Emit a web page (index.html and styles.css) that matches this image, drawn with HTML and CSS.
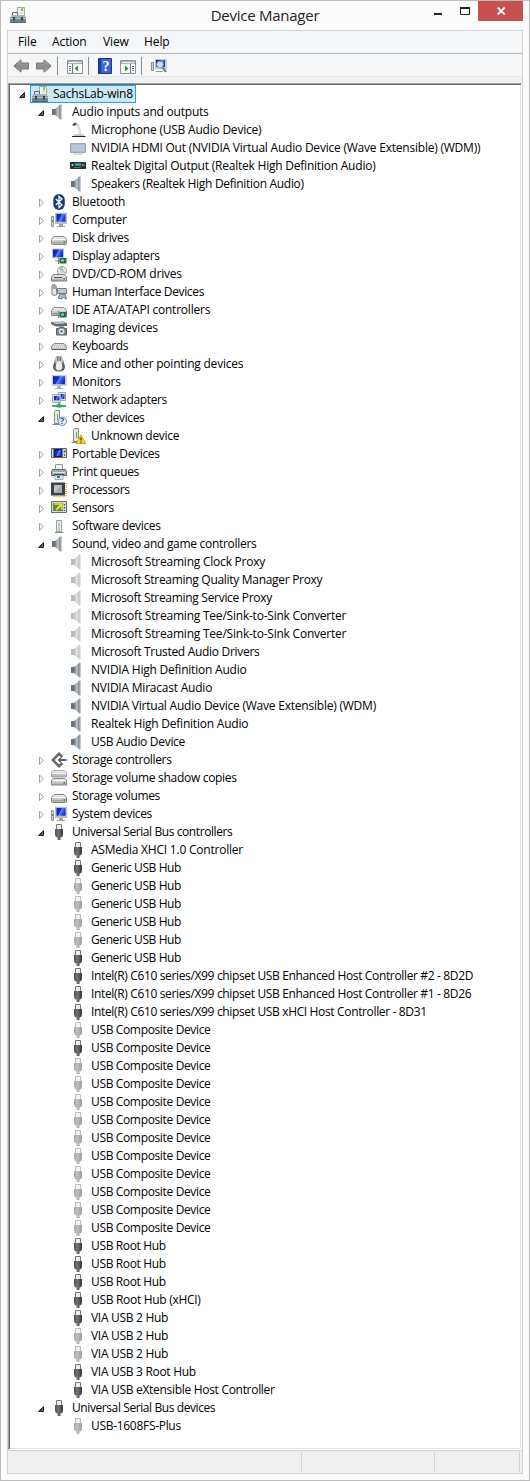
FILE: index.html
```html
<!DOCTYPE html>
<html lang="en">
<head>
<meta charset="utf-8">
<title>Device Manager</title>
<link rel="stylesheet" href="styles.css">
</head>
<body>
<svg class="sprite" aria-hidden="true">
<defs>
<linearGradient id="metal" x1="0" x2="1"><stop offset="0" stop-color="#6b747b"/><stop offset=".55" stop-color="#c6cbcf"/><stop offset="1" stop-color="#5f686f"/></linearGradient>
<linearGradient id="silver" x1="0" y1="0" x2="0" y2="1"><stop offset="0" stop-color="#f4f4f4"/><stop offset="1" stop-color="#aaa"/></linearGradient>
<linearGradient id="screen" x1="0" x2="1" y1="0" y2=".4"><stop offset="0" stop-color="#0619a0"/><stop offset=".5" stop-color="#1234dc"/><stop offset=".55" stop-color="#5f8cf5"/><stop offset="1" stop-color="#1530c8"/></linearGradient>
<linearGradient id="plug" x1="0" x2="1"><stop offset="0" stop-color="#4a4a4d"/><stop offset=".4" stop-color="#77777a"/><stop offset="1" stop-color="#353538"/></linearGradient>
<linearGradient id="arrowfill" x1="0" y1="0" x2="0" y2="1"><stop offset="0" stop-color="#b5b5b5"/><stop offset=".5" stop-color="#8b8b8b"/><stop offset="1" stop-color="#a9a9a9"/></linearGradient>
<symbol id="toolbox" viewBox="0 0 16 16"><path d="M7.5 .5h7v8h-7z" fill="#f2f4ef" stroke="#a5aaa2"/><path d="M9 7l3-4h1v4z" fill="#dfe3da"/><path d="M11 1h2v3h-2z" fill="#8acb45"/><path d="M2.500 8V5.500h5V8" fill="none" stroke="#5e666b"/><path d="M1.500 8h13l1.500 3H0z" fill="#a7b3ba"/><path d="M0 10.500h16V16H0z" fill="#74828b"/><path d="M0 11.500h16" stroke="#b7c3ca"/><path d="M.5 15.500h15" stroke="#56626a"/><path d="M3 10h2v3.500H3zM11 10h2v3.500h-2z" fill="#39434a"/></symbol>
<symbol id="speaker" viewBox="0 0 16 16"><path d="M1 5h3v6H1z" fill="#69737b"/><path d="M4 5l5.500-4.500v15L4 11z" fill="url(#metal)"/><path d="M9.500 .5h1v15h-1z" fill="#8c949a"/></symbol>
<symbol id="mic" viewBox="0 0 16 16"><path d="M3 1.500Q6-.5 8.500 2q2.500 4 3 10H9.500Q8 6 5.500 3.500z" fill="#dcdcdc"/><path d="M2 3l3-2.500 2 1.500-2.500 2z" fill="#4c4c4c"/><path d="M5 12h8l2.500 3H2z" fill="#c9c9c9"/><path d="M2 14.500h13.500" stroke="#222"/></symbol>
<symbol id="hdmi" viewBox="0 0 16 16"><path d="M.5 3.500h15v9H.5z" fill="#aebdcb" stroke="#9aaab9"/><path d="M2 5h12v6H2z" fill="#b9c8da"/><path d="M3 14h10" stroke="#b9bfc5"/></symbol>
<symbol id="digital" viewBox="0 0 16 16"><path d="M0 4h16v7H0z" fill="#29333a"/><path d="M5 5.500h6v2H5z" fill="#31c4c6"/><circle cx="2.500" cy="7" r="1" fill="#d1dae0"/><circle cx="13" cy="7" r="1.200" fill="#7996a5"/><path d="M4 9.500h7" stroke="#576b78"/></symbol>
<symbol id="bluetooth" viewBox="0 0 16 16"><rect x="2.300" width="11.500" height="16" rx="5.700" fill="#123a78"/><path d="M4.800 5l6.200 6-3 2.500v-11L11 5l-6.200 6" fill="none" stroke="#fff" stroke-width="1.300"/></symbol>
<symbol id="monitor" viewBox="0 0 16 16"><path d="M.7 1h15v11h-15z" fill="#c8ccd0"/><path d="M2 2.200h12v8H2z" fill="url(#screen)"/><path d="M6 12h4v2h2v1H4v-1h2z" fill="#a9afb2"/></symbol>
<symbol id="computer" viewBox="0 0 16 16"><path d="M.5 4.500h2v10h-2z" fill="#ddd" stroke="#8b9294"/><path d="M1 8h1v2H1z" fill="#4db02e"/><path d="M4 .7h12V12H4z" fill="#b9c0c7"/><path d="M5.500 2h9v7.700h-9z" fill="url(#screen)"/><path d="M8 12h4v2h2v1H6v-1h2z" fill="#9aa2a8"/></symbol>
<symbol id="disk" viewBox="0 0 16 16"><path d="M3 6.500h10l2.500 3v4q0 1-1 1h-13q-1 0-1-1v-4z" fill="url(#silver)" stroke="#858585"/><path d="M1 9.500h14" stroke="#f8f8f8"/><path d="M2 12.500h9" stroke="#aaa"/><path d="M12.500 11h1.500v2.500h-1.500z" fill="#35a32f"/></symbol>
<symbol id="display" viewBox="0 0 16 16"><path d="M1 .5h12v10H1z" fill="#bfc5cc"/><path d="M2 1.500h10v7.500H2z" fill="url(#screen)"/><path d="M4 12h5v1.500H4z" fill="#aab0b3"/><path d="M8.500 10h7v5.500h-7z" fill="#15734a"/><path d="M10 11.500h3v2h-3z" fill="#9bd4ac"/><path d="M7.500 9v7" stroke="#888"/></symbol>
<symbol id="dvd" viewBox="0 0 16 16"><circle cx="11" cy="5" r="4.600" fill="#e3e7e3" stroke="#8f9690" stroke-width=".8"/><path d="M11 5l-3-3 3-1.500zM11 5l4 2" fill="#a3cf9b" stroke="#9bc294"/><circle cx="11" cy="5" r="1.200" fill="#fff" stroke="#888" stroke-width=".6"/><path d="M2.500 8.500h11l2 2.500v4H.5v-4z" fill="url(#silver)" stroke="#7b7b7b"/><path d="M3 11.500h8" stroke="#555"/><path d="M12.500 12h1.500v1.500h-1.500z" fill="#319f31"/></symbol>
<symbol id="hid" viewBox="0 0 16 16"><path d="M1 1.500q2-1.500 4 0l1 9q-2.500 2-5 0z" fill="#e6e9e8" stroke="#707679"/><path d="M2 4h3M3 .5v4" stroke="#777e82"/><path d="M6.500 4.500h9v5h-9z" fill="#dde1e2" stroke="#788086"/><path d="M7.500 6h7M7.500 8h7" stroke="#6c767d" stroke-dasharray="1 1"/><path d="M7 14l2-4h5l1.500 5-3-1.500L10 15z" fill="#a8bac2" stroke="#647681"/></symbol>
<symbol id="ide" viewBox="0 0 16 16"><path d="M3 5.500h10l2.500 3v5H.5v-5z" fill="url(#silver)" stroke="#858585"/><path d="M2 11.500h6" stroke="#888"/><path d="M8.500 10h7v5.500h-7z" fill="#15734a"/><path d="M10 11.500h3v2h-3z" fill="#9bd4ac"/><path d="M7.500 9v7" stroke="#888"/></symbol>
<symbol id="imaging" viewBox="0 0 16 16"><path d="M0 2l12-.5 4 2V6L5 6.500 0 4z" fill="#626a6d"/><path d="M1 2.500l11-.5 2 1.300-9 .7z" fill="#ccd2d3"/><path d="M5.500 8.500h2l1-1.500h4l1 1.500h2v6.500h-10z" fill="#7d8588" stroke="#565e61"/><circle cx="10.500" cy="11.500" r="2.800" fill="#e7eef3"/><circle cx="10.500" cy="11.500" r="1.300" fill="#346da2"/></symbol>
<symbol id="keyboard" viewBox="0 0 16 16"><path d="M3 5.500h10l2.500 3v2q0 1-1 1h-13q-1 0-1-1v-2z" fill="#c7c9ca" stroke="#868889"/><path d="M3 7h10M2 9h12" stroke="#fff" stroke-dasharray="1 1"/><path d="M1 11.500h14" stroke="#555"/></symbol>
<symbol id="mouse" viewBox="0 0 16 16"><path d="M5 .5h6l3 10q0 5-6 5t-6-5z" fill="#555d62"/><path d="M5.500 6Q8 4 10.500 6l1 6q-1 2.500-3.500 2.500T4.500 12z" fill="#ededed"/><path d="M4 1l2 0 .5 5-2 2zM12 1l-2 0-.5 5 2 2z" fill="#c9cccd"/><path d="M8 1v4" stroke="#e8e8e8"/></symbol>
<symbol id="network" viewBox="0 0 16 16"><path d="M7.500 .5h7v8h-7z" fill="#e0e4e8" stroke="#9ca5ac"/><path d="M9 2h4.500v5H9z" fill="url(#screen)"/><path d="M1.500 2.500h8v8h-8z" fill="#e0e4e8" stroke="#9ca5ac"/><path d="M3 4h5.500v4.500H3z" fill="url(#screen)"/><path d="M7 11h2v3H7z" fill="#7a8a80"/><path d="M1 14h14" stroke="#31b968" stroke-width="2"/><path d="M5.500 12.500h5v3h-5z" fill="#27a85a"/></symbol>
<symbol id="tower" viewBox="0 0 16 16"><path d="M3.500 1.500l1-1h4v13h-5z" fill="#e5e7e6" stroke="#848a87"/><path d="M6 4h1v6H6z" fill="#57b944"/><path d="M1.500 14.500h8" stroke="#808683"/></symbol>
<symbol id="other" viewBox="0 0 16 16"><use href="#tower"/><circle cx="11.300" cy="11.300" r="4.200" fill="#e5f0fa" stroke="#6e8faf"/><text x="9.200" y="14.300" class="glyph-mark" fill="#194aa9">?</text></symbol>
<symbol id="unknown" viewBox="0 0 16 16"><use href="#tower"/><path d="M11 7l4.700 8.500H6.300z" fill="#ffd735" stroke="#d2a100" stroke-linejoin="round"/><path d="M11 9.500v3M11 13.500v1.200" stroke="#443600" stroke-width="1.300"/></symbol>
<symbol id="portable" viewBox="0 0 16 16"><path d="M.5 2.500h15v9H.5z" fill="#d7d9dc" stroke="#5d6469"/><path d="M2.500 3h9v8h-9z" fill="#14205c"/><path d="M4 4h6.500v6H4z" fill="url(#screen)"/><circle cx="13.500" cy="5.500" r="1" fill="#444"/><path d="M13 8h1v2h-1z" fill="#666"/></symbol>
<symbol id="printer" viewBox="0 0 16 16"><path d="M4.500 .5h7v6h-7z" fill="#f1f3f4" stroke="#92999d"/><path d="M1.500 5.500h13l1 2v4H.5v-4z" fill="#a4abaf" stroke="#61696d"/><path d="M2 8.500h12" stroke="#e0e4e5"/><path d="M3 10h10v1.500H3z" fill="#3f484d"/><path d="M4 11.500h8v4H4z" fill="#e6eef3" stroke="#9aa"/><path d="M6 12h3v2H6z" fill="#257aac"/></symbol>
<symbol id="processor" viewBox="0 0 16 16"><path d="M15 1v13.500H2" fill="none" stroke="#d6a438" stroke-width="1.500" stroke-dasharray="1 1"/><path d="M0 .5h14v13H0z" fill="#3e4244"/><path d="M3 3h8v8H3z" fill="#c0c4c6"/><path d="M11 3v8H3z" fill="#a5aaad"/></symbol>
<symbol id="sensor" viewBox="0 0 16 16"><path d="M.5 1.500h15v11H.5z" fill="#d7dad8" stroke="#67706c"/><path d="M2 3h10v8H2z" fill="#688738"/><path d="M3 4h7l-5 6 6-5v5" fill="none" stroke="#e5e345" stroke-width="1.300"/><path d="M13.500 4v1.500M13.500 7v1.500M13.500 10v1" stroke="#555" stroke-width="1.300"/></symbol>
<symbol id="software" viewBox="0 0 16 16"><path d="M5.500 2.500h5v11h-5z" fill="#eceeec" stroke="#9ca19e"/><path d="M7.500 4.500h1v4h-1z" fill="#69bd51"/><path d="M7.500 9h1v4h-1z" fill="#aaa"/><path d="M4 14.500h8.500" stroke="#888d8a"/></symbol>
<symbol id="storagectl" viewBox="0 0 16 16"><path d="M11.500 5L8 1.800 1.800 8 8 14.200l3.500-3.200" fill="none" stroke="#66696b" stroke-width="2.500"/><path d="M6.500 8l3.500-3v2h5.500v2H10v2z" fill="#5c5f61"/></symbol>
<symbol id="shadow" viewBox="0 0 16 16"><path d="M2.500 .5h11l2 2v4.500H.5V2.500z" fill="url(#silver)" stroke="#aaa"/><path d="M2.500 8.500h11l2 1.500v5H.5v-5z" fill="url(#silver)" stroke="#858585"/><path d="M1 3.500h14M1 10.500h14" stroke="#f5f5f5"/><path d="M12.500 12h1.500v2h-1.500z" fill="#35a32f"/></symbol>
<symbol id="usb" viewBox="0 0 16 16"><path d="M5.500 .5h5v5h-5z" fill="#ececec" stroke="#77777a"/><path d="M4 5h8v5.500Q12 13 9.500 13.500V16h-3v-2.500Q4 13 4 10.500z" fill="url(#plug)"/></symbol>
<symbol id="open" viewBox="0 0 8 18"><path d="M6.500 7.500v5h-5z" fill="#555" stroke="#222"/></symbol>
<symbol id="closed" viewBox="0 0 8 18"><path d="M2.500 6v7.500L6.300 9.800z" fill="#fff" stroke="#a3a3a3"/></symbol>
<symbol id="back" viewBox="0 0 16 16"><path d="M.8 8L8 1.800V5h7.500v6H8v3.200z" fill="url(#arrowfill)" stroke="#767676"/></symbol>
<symbol id="console" viewBox="0 0 16 14"><path d="M.5 .5h15v13H.5z" fill="#f9fafb" stroke="#8b9298"/><path d="M1 1h14v3H1z" fill="#a9b2b9"/><path d="M2 2.500h9M12 2.500h2" stroke="#f4f6f7"/></symbol>
</defs>
</svg>

<main class="window">
<header class="titlebar">
<svg class="icon app-icon"><use href="#toolbox"/></svg>
<h1 class="title">Device Manager</h1>
<div class="controls">
<svg class="control-icons" viewBox="0 0 46 20"><path d="M0 12h8v2H0z" fill="#222"/><path d="M26.500 6.500h9v7h-9z" fill="none" stroke="#222"/><path d="M26 6h10v2H26z" fill="#222"/></svg>
<span class="close"><svg viewBox="0 0 10 8"><path d="M1.700 .5l7 7M8.700 .5l-7 7" stroke="#fff" stroke-width="1.800"/></svg></span>
</div>
</header>
<section class="frame">
<nav class="menubar"><span class="m-file">File</span><span class="m-action">Action</span><span class="m-view">View</span><span>Help</span></nav>
<div class="toolbar">
<svg class="icon"><use href="#back"/></svg>
<svg class="icon flip"><use href="#back"/></svg>
<i class="separator"></i>
<svg class="console" viewBox="0 0 16 14"><use href="#console"/><path d="M5.500 4v9M2 6.500h2M2 8.500h2M2 10.500h2" stroke="#5e7387"/><path d="M11 5.500v6L7.500 8.500z" fill="#20a32a"/></svg>
<i class="separator"></i>
<svg class="help" viewBox="0 0 14 16"><path d="M.5 .5h13v15H.5z" fill="#3f66cf" stroke="#1c3486"/><path d="M1 1h2v14H1z" fill="#223d9b"/><text x="4.500" y="13" fill="#fff">?</text></svg>
<svg class="console" viewBox="0 0 16 14"><use href="#console"/><path d="M10.500 4v9M12 6.500h2M12 8.500h2M12 10.500h2" stroke="#5e7387"/><path d="M5 5.500v6l3.500-3z" fill="#20a32a"/></svg>
<i class="separator"></i>
<svg class="icon scan" viewBox="0 0 16 16"><path d="M.5 4.500h2v8h-2z" fill="#d4d4d4" stroke="#8a8f92"/><path d="M4 1h12v10H4z" fill="#c4cad0"/><path d="M5 2h9v7H5z" fill="url(#screen)"/><path d="M5 13h7v1H5z" fill="#999"/><circle cx="9" cy="6.500" r="3.400" fill="#c7e1fa" stroke="#7d98ab"/><path d="M11.500 9.500l3.500 4.500" stroke="#6d7378" stroke-width="2"/></svg>
</div>
<div class="tree">
<div class="row root"><svg class="arrow"><use href="#open"/></svg><div class="selected"><svg class="icon"><use href="#toolbox"/></svg><span>SachsLab-win8</span></div></div>
<div class="row"><svg class="arrow"><use href="#open"/></svg><svg class="icon"><use href="#speaker"/></svg><span>Audio inputs and outputs</span></div>
<div class="row leaf"><svg class="icon"><use href="#mic"/></svg><span>Microphone (USB Audio Device)</span></div>
<div class="row leaf"><svg class="icon"><use href="#hdmi"/></svg><span>NVIDIA HDMI Out (NVIDIA Virtual Audio Device (Wave Extensible) (WDM))</span></div>
<div class="row leaf"><svg class="icon"><use href="#digital"/></svg><span>Realtek Digital Output (Realtek High Definition Audio)</span></div>
<div class="row leaf snug"><svg class="icon"><use href="#speaker"/></svg><span>Speakers (Realtek High Definition Audio)</span></div>
<div class="row"><svg class="arrow"><use href="#closed"/></svg><svg class="icon"><use href="#bluetooth"/></svg><span>Bluetooth</span></div>
<div class="row"><svg class="arrow"><use href="#closed"/></svg><svg class="icon"><use href="#computer"/></svg><span>Computer</span></div>
<div class="row tight"><svg class="arrow"><use href="#closed"/></svg><svg class="icon"><use href="#disk"/></svg><span>Disk drives</span></div>
<div class="row tight"><svg class="arrow"><use href="#closed"/></svg><svg class="icon"><use href="#display"/></svg><span>Display adapters</span></div>
<div class="row"><svg class="arrow"><use href="#closed"/></svg><svg class="icon"><use href="#dvd"/></svg><span>DVD/CD-ROM drives</span></div>
<div class="row tight"><svg class="arrow"><use href="#closed"/></svg><svg class="icon"><use href="#hid"/></svg><span>Human Interface Devices</span></div>
<div class="row"><svg class="arrow"><use href="#closed"/></svg><svg class="icon"><use href="#ide"/></svg><span>IDE ATA/ATAPI controllers</span></div>
<div class="row"><svg class="arrow"><use href="#closed"/></svg><svg class="icon"><use href="#imaging"/></svg><span>Imaging devices</span></div>
<div class="row tight"><svg class="arrow"><use href="#closed"/></svg><svg class="icon"><use href="#keyboard"/></svg><span>Keyboards</span></div>
<div class="row"><svg class="arrow"><use href="#closed"/></svg><svg class="icon"><use href="#mouse"/></svg><span>Mice and other pointing devices</span></div>
<div class="row"><svg class="arrow"><use href="#closed"/></svg><svg class="icon"><use href="#monitor"/></svg><span>Monitors</span></div>
<div class="row tight"><svg class="arrow"><use href="#closed"/></svg><svg class="icon"><use href="#network"/></svg><span>Network adapters</span></div>
<div class="row tight"><svg class="arrow"><use href="#open"/></svg><svg class="icon"><use href="#other"/></svg><span>Other devices</span></div>
<div class="row leaf snug"><svg class="icon"><use href="#unknown"/></svg><span>Unknown device</span></div>
<div class="row tight"><svg class="arrow"><use href="#closed"/></svg><svg class="icon"><use href="#portable"/></svg><span>Portable Devices</span></div>
<div class="row tight"><svg class="arrow"><use href="#closed"/></svg><svg class="icon"><use href="#printer"/></svg><span>Print queues</span></div>
<div class="row tight"><svg class="arrow"><use href="#closed"/></svg><svg class="icon"><use href="#processor"/></svg><span>Processors</span></div>
<div class="row tight"><svg class="arrow"><use href="#closed"/></svg><svg class="icon"><use href="#sensor"/></svg><span>Sensors</span></div>
<div class="row tight"><svg class="arrow"><use href="#closed"/></svg><svg class="icon"><use href="#software"/></svg><span>Software devices</span></div>
<div class="row snug"><svg class="arrow"><use href="#open"/></svg><svg class="icon"><use href="#speaker"/></svg><span>Sound, video and game controllers</span></div>
<div class="row leaf hidden-device"><svg class="icon"><use href="#speaker"/></svg><span>Microsoft Streaming Clock Proxy</span></div>
<div class="row leaf hidden-device snug"><svg class="icon"><use href="#speaker"/></svg><span>Microsoft Streaming Quality Manager Proxy</span></div>
<div class="row leaf hidden-device snug"><svg class="icon"><use href="#speaker"/></svg><span>Microsoft Streaming Service Proxy</span></div>
<div class="row leaf hidden-device"><svg class="icon"><use href="#speaker"/></svg><span>Microsoft Streaming Tee/Sink-to-Sink Converter</span></div>
<div class="row leaf hidden-device"><svg class="icon"><use href="#speaker"/></svg><span>Microsoft Streaming Tee/Sink-to-Sink Converter</span></div>
<div class="row leaf hidden-device snug"><svg class="icon"><use href="#speaker"/></svg><span>Microsoft Trusted Audio Drivers</span></div>
<div class="row leaf"><svg class="icon"><use href="#speaker"/></svg><span>NVIDIA High Definition Audio</span></div>
<div class="row leaf"><svg class="icon"><use href="#speaker"/></svg><span>NVIDIA Miracast Audio</span></div>
<div class="row leaf"><svg class="icon"><use href="#speaker"/></svg><span>NVIDIA Virtual Audio Device (Wave Extensible) (WDM)</span></div>
<div class="row leaf"><svg class="icon"><use href="#speaker"/></svg><span>Realtek High Definition Audio</span></div>
<div class="row leaf snug"><svg class="icon"><use href="#speaker"/></svg><span>USB Audio Device</span></div>
<div class="row tight"><svg class="arrow"><use href="#closed"/></svg><svg class="icon"><use href="#storagectl"/></svg><span>Storage controllers</span></div>
<div class="row snug"><svg class="arrow"><use href="#closed"/></svg><svg class="icon"><use href="#shadow"/></svg><span>Storage volume shadow copies</span></div>
<div class="row tight"><svg class="arrow"><use href="#closed"/></svg><svg class="icon"><use href="#disk"/></svg><span>Storage volumes</span></div>
<div class="row tight"><svg class="arrow"><use href="#closed"/></svg><svg class="icon"><use href="#computer"/></svg><span>System devices</span></div>
<div class="row tighter"><svg class="arrow"><use href="#open"/></svg><svg class="icon"><use href="#usb"/></svg><span>Universal Serial Bus controllers</span></div>
<div class="row leaf"><svg class="icon"><use href="#usb"/></svg><span>ASMedia XHCI 1.0 Controller</span></div>
<div class="row leaf tighter"><svg class="icon"><use href="#usb"/></svg><span>Generic USB Hub</span></div>
<div class="row leaf hidden-device tighter"><svg class="icon"><use href="#usb"/></svg><span>Generic USB Hub</span></div>
<div class="row leaf hidden-device tighter"><svg class="icon"><use href="#usb"/></svg><span>Generic USB Hub</span></div>
<div class="row leaf hidden-device tighter"><svg class="icon"><use href="#usb"/></svg><span>Generic USB Hub</span></div>
<div class="row leaf hidden-device tighter"><svg class="icon"><use href="#usb"/></svg><span>Generic USB Hub</span></div>
<div class="row leaf tighter"><svg class="icon"><use href="#usb"/></svg><span>Generic USB Hub</span></div>
<div class="row leaf tight"><svg class="icon"><use href="#usb"/></svg><span>Intel(R) C610 series/X99 chipset USB Enhanced Host Controller #2 - 8D2D</span></div>
<div class="row leaf tight"><svg class="icon"><use href="#usb"/></svg><span>Intel(R) C610 series/X99 chipset USB Enhanced Host Controller #1 - 8D26</span></div>
<div class="row leaf tight"><svg class="icon"><use href="#usb"/></svg><span>Intel(R) C610 series/X99 chipset USB xHCI Host Controller - 8D31</span></div>
<div class="row leaf hidden-device tight"><svg class="icon"><use href="#usb"/></svg><span>USB Composite Device</span></div>
<div class="row leaf tight"><svg class="icon"><use href="#usb"/></svg><span>USB Composite Device</span></div>
<div class="row leaf hidden-device tight"><svg class="icon"><use href="#usb"/></svg><span>USB Composite Device</span></div>
<div class="row leaf hidden-device tight"><svg class="icon"><use href="#usb"/></svg><span>USB Composite Device</span></div>
<div class="row leaf hidden-device tight"><svg class="icon"><use href="#usb"/></svg><span>USB Composite Device</span></div>
<div class="row leaf hidden-device tight"><svg class="icon"><use href="#usb"/></svg><span>USB Composite Device</span></div>
<div class="row leaf hidden-device tight"><svg class="icon"><use href="#usb"/></svg><span>USB Composite Device</span></div>
<div class="row leaf hidden-device tight"><svg class="icon"><use href="#usb"/></svg><span>USB Composite Device</span></div>
<div class="row leaf hidden-device tight"><svg class="icon"><use href="#usb"/></svg><span>USB Composite Device</span></div>
<div class="row leaf hidden-device tight"><svg class="icon"><use href="#usb"/></svg><span>USB Composite Device</span></div>
<div class="row leaf hidden-device tight"><svg class="icon"><use href="#usb"/></svg><span>USB Composite Device</span></div>
<div class="row leaf hidden-device tight"><svg class="icon"><use href="#usb"/></svg><span>USB Composite Device</span></div>
<div class="row leaf tight"><svg class="icon"><use href="#usb"/></svg><span>USB Root Hub</span></div>
<div class="row leaf tight"><svg class="icon"><use href="#usb"/></svg><span>USB Root Hub</span></div>
<div class="row leaf tight"><svg class="icon"><use href="#usb"/></svg><span>USB Root Hub</span></div>
<div class="row leaf snug"><svg class="icon"><use href="#usb"/></svg><span>USB Root Hub (xHCI)</span></div>
<div class="row leaf snug"><svg class="icon"><use href="#usb"/></svg><span>VIA USB 2 Hub</span></div>
<div class="row leaf hidden-device snug"><svg class="icon"><use href="#usb"/></svg><span>VIA USB 2 Hub</span></div>
<div class="row leaf hidden-device snug"><svg class="icon"><use href="#usb"/></svg><span>VIA USB 2 Hub</span></div>
<div class="row leaf snug"><svg class="icon"><use href="#usb"/></svg><span>VIA USB 3 Root Hub</span></div>
<div class="row leaf snug"><svg class="icon"><use href="#usb"/></svg><span>VIA USB eXtensible Host Controller</span></div>
<div class="row tighter"><svg class="arrow"><use href="#open"/></svg><svg class="icon"><use href="#usb"/></svg><span>Universal Serial Bus devices</span></div>
<div class="row leaf hidden-device snug"><svg class="icon"><use href="#usb"/></svg><span>USB-1608FS-Plus</span></div>
</div>
<footer class="statusbar"><i class="pane-main"></i><i class="pane-mid"></i><i class="pane-end"></i></footer>
</section>
</main>
</body>
</html>
```
FILE: styles.css
```css
* { box-sizing: border-box; }
body { margin: 0; background: #fcfcfc; color: #000; font: 12px/18px "Open Sans", "Noto Sans", sans-serif; }
svg { display: block; flex: none; }
.sprite { position: absolute; width: 0; height: 0; }
.window { width: 530px; height: 1481px; padding: 0 6px 6px; border: 1px solid #bcbcbc; display: flex; flex-direction: column; }
.titlebar { height: 29px; flex: none; display: grid; grid-template-columns: 95px 1fr 95px; }
.app-icon { margin: 6px 0 0 3px; }
.title { margin: 0; padding-top: 3px; font-size: 15px; line-height: 22px; font-weight: 400; text-align: center; letter-spacing: -0.25px; color: #222; }
.controls { display: flex; justify-content: flex-end; }
.control-icons { width: 46px; height: 20px; margin-right: -2px; }
.close { width: 45px; height: 20px; background: #c75050; display: flex; align-items: center; justify-content: center; flex: none; }
.close svg { width: 10px; height: 8px; }
.frame { flex: 1; border: 1px solid #d3d3d3; background: #f0f0f0; display: flex; flex-direction: column; }
.menubar { height: 23px; flex: none; display: flex; padding: 2px 0 0 10px; background: #f5f6f7; border-bottom: 1px solid #b4b4b4; letter-spacing: -0.1px; }
.m-file { width: 34px; }
.m-action { width: 51px; }
.m-view { width: 41px; }
.toolbar { height: 23px; flex: none; display: flex; align-items: center; padding: 2px 0 0 5px; background: #f5f6f7; border-bottom: 1px solid #e3e3e3; }
.separator { width: 1px; height: 18px; background: #8c8c8c; margin: 0 9px 0 5px; }
.icon { width: 16px; height: 16px; }
.flip { transform: scaleX(-1); margin-left: 7px; }
.console { width: 16px; height: 14px; margin-top: 2px; }
.help { width: 14px; height: 16px; }
.help text { font: 700 14px "Liberation Serif", serif; }
.help + .console { margin-left: 8px; }
.glyph-mark { font: 700 8px "Open Sans", sans-serif; }
.tree { flex: 1; margin-top: 6px; background: #fff; border: 1px solid #a0a0a0; border-right-color: #fff; border-bottom-color: #fff; box-shadow: inset 1px 1px #696969, inset -1px -1px #e3e3e3; padding: 1px 1px 1px 28px; letter-spacing: -0.22px; }
.snug { letter-spacing: -0.3px; }
.tight { letter-spacing: -0.35px; }
.tighter { letter-spacing: -0.41px; }
.row { height: 18px; display: flex; align-items: center; white-space: nowrap; }
.row span { padding-left: 5px; }
.arrow { width: 8px; height: 18px; margin-right: 6px; }
.root { margin-left: -19px; }
.root .arrow { margin-right: 4px; }
.selected { height: 18px; width: 106px; display: flex; align-items: center; padding-left: 1px; border: 1px solid #26a0da; background: #cbe8f6; }
.leaf { padding-left: 33px; }
.hidden-device .icon { opacity: .48; }
.statusbar { height: 23px; flex: none; border-top: 1px solid #d3d3d3; display: flex; padding: 1px 2px 1px 0; }
.statusbar i { border-right: 1px solid #d3d3d3; }
.pane-main { width: 294px; }
.pane-mid { width: 133px; }
.pane-end { width: 85px; }
```
